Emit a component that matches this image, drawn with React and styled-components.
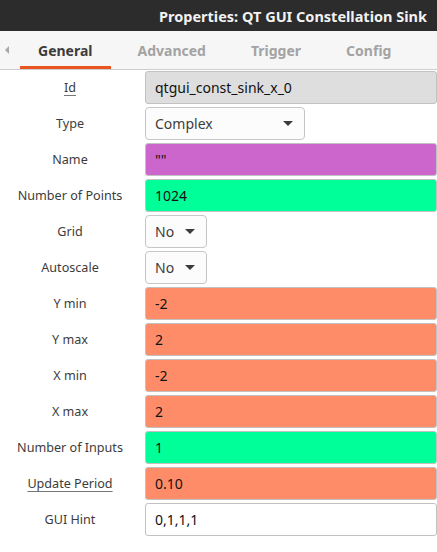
import React from "react";
import styled, { createGlobalStyle } from "styled-components";

const GlobalStyle = createGlobalStyle`
  body {
    margin: 0;
    background: #ffffff;
    font-family: "Noto Sans", "Open Sans", sans-serif;
  }
`;

const rows = [
  { label: "Id", value: "qtgui_const_sink_x_0", bg: "#dedede", link: true },
  { label: "Type", value: "Complex", select: 160 },
  { label: "Name", value: '""', bg: "#cc66cc" },
  { label: "Number of Points", value: "1024", bg: "#00ff99" },
  { label: "Grid", value: "No", select: 62 },
  { label: "Autoscale", value: "No", select: 62 },
  { label: "Y min", value: "-2", bg: "#ff8c69" },
  { label: "Y max", value: "2", bg: "#ff8c69" },
  { label: "X min", value: "-2", bg: "#ff8c69" },
  { label: "X max", value: "2", bg: "#ff8c69" },
  { label: "Number of Inputs", value: "1", bg: "#00ff99" },
  { label: "Update Period", value: "0.10", bg: "#ff8c69", link: true },
  { label: "GUI Hint", value: "0,1,1,1", bg: "#ffffff" },
];

const tabs = ["General", "Advanced", "Trigger", "Config"];

const App = () => {
  return (
    <>
      <GlobalStyle />
      <Window>
        <TitleBar>Properties: QT GUI Constellation Sink</TitleBar>
        <TabBar>
          <ScrollArrow />
          {tabs.map((t, i) => (
            <Tab key={t} active={i === 0}>
              {t}
            </Tab>
          ))}
        </TabBar>
        <Form>
          {rows.map((r) => (
            <React.Fragment key={r.label}>
              <Label link={r.link}>{r.label}</Label>
              {r.select ? (
                <Select width={r.select}>
                  <span>{r.value}</span>
                  <Caret />
                </Select>
              ) : (
                <Field bg={r.bg}>{r.value}</Field>
              )}
            </React.Fragment>
          ))}
        </Form>
      </Window>
    </>
  );
};

export default App;

const Window = styled.div`
  width: 437px;
  height: 552px;
  overflow: hidden;
  background: #ffffff;
`;

const TitleBar = styled.div`
  height: 31px;
  background: #2c2c2c;
  color: #f2f2f2;
  font-weight: bold;
  font-size: 14.5px;
  display: flex;
  align-items: center;
  justify-content: flex-end;
  padding-right: 10px;
`;

const TabBar = styled.div`
  height: 38px;
  background: #f6f6f6;
  border-bottom: 1px solid #cdcdcd;
  display: flex;
  align-items: stretch;
`;

const ScrollArrow = styled.div`
  width: 0;
  height: 0;
  align-self: center;
  margin: 0 11px 0 5px;
  border-top: 4px solid transparent;
  border-bottom: 4px solid transparent;
  border-right: 4px solid #a8a8a8;
`;

const Tab = styled.div`
  display: flex;
  align-items: center;
  padding: 0 18px;
  margin-right: 9px;
  font-size: 14px;
  font-weight: bold;
  color: ${({ active }) => (active ? "#3c3c3c" : "#a3a3a3")};
  border-bottom: 3px solid ${({ active }) => (active ? "#e95420" : "transparent")};
  padding-top: 3px;
`;

const Form = styled.div`
  display: grid;
  grid-template-columns: 140px 1fr;
  column-gap: 5px;
  row-gap: 3px;
  padding-top: 1px;
`;

const Label = styled.div`
  height: 33px;
  display: flex;
  align-items: center;
  justify-content: center;
  font-size: 12.6px;
  color: #3c3c3c;
  text-decoration: ${({ link }) => (link ? "underline" : "none")};
  text-underline-offset: 3px;
  text-decoration-color: #777;
`;

const Field = styled.div`
  height: 33px;
  box-sizing: border-box;
  border: 1px solid #c2c2c2;
  border-radius: 3px;
  background: ${({ bg }) => bg};
  display: flex;
  align-items: center;
  padding: 0 9px;
  font-size: 14px;
  color: #111;
`;

const Select = styled.div`
  width: ${({ width }) => width}px;
  height: 33px;
  box-sizing: border-box;
  border: 1px solid #c6c6c6;
  border-radius: 4px;
  background: #fcfcfc;
  display: flex;
  align-items: center;
  justify-content: space-between;
  padding: 0 11px 0 9px;
  font-size: 14px;
  color: #3c3c3c;
`;

const Caret = styled.div`
  width: 0;
  height: 0;
  border-left: 5px solid transparent;
  border-right: 5px solid transparent;
  border-top: 5px solid #3c3c3c;
`;
